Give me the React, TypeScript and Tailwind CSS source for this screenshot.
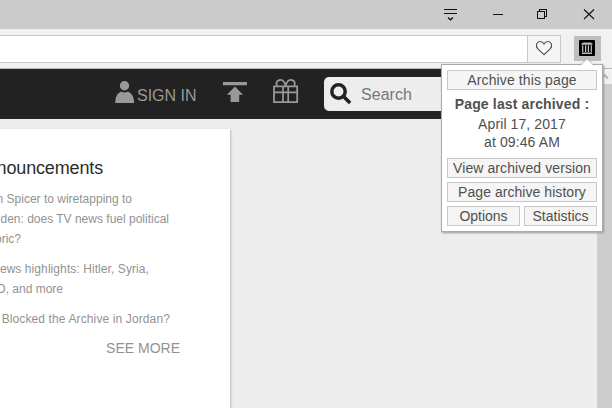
import React from "react";

function Line({ right, children }: { right: string; children: React.ReactNode }) {
  return <div className={`flex h-5 justify-end whitespace-nowrap ${right}`}>{children}</div>;
}

function PopupButton({ children, className = "", text = "" }: { children: React.ReactNode; className?: string; text?: string }) {
  return (
    <button className={`flex h-5 items-center justify-center border border-[#c8c8c8] bg-[#f5f5f5] whitespace-nowrap ${className}`}>
      <span className={text}>{children}</span>
    </button>
  );
}

function TitleBar() {
  return (
    <div className="flex h-[29px] shrink-0 justify-end bg-[#cbcbcb]">
      <svg width="180" height="29" viewBox="432 0 180 29" fill="none" stroke="#111" strokeWidth="1" shapeRendering="crispEdges">
        <path d="M444 9.5h13M444 13.5h13M493 14.5h10" />
        <path d="M448 17.5l2.5 2.3 2.5-2.3" shapeRendering="auto" strokeWidth="1.3" />
        <path d="M537.5 11.5h7v7h-7zM539.5 11v-1.5h7v7h-2" />
        <path d="M584 9.5l10 9.5M594 9.5l-10 9.5" shapeRendering="auto" strokeWidth="1.1" />
      </svg>
    </div>
  );
}

function Toolbar() {
  return (
    <div className="flex h-10 shrink-0 items-start border-b border-[#b9b9b9] bg-[#f1f1f1] pt-[6px]">
      <div className="flex h-7 w-[561px] border-y border-r border-[#c9c9c9] bg-white">
        <div className="flex-1" />
        <div className="flex w-[33px] border-l border-[#c9c9c9] bg-[#f4f5f7]">
          <svg width="32" height="26" viewBox="528 36 32 26" fill="none" stroke="#4d4d4d" strokeWidth="1.1">
            <path d="M544 54.7l-6.2-5.8c-3-3.2-.8-7.4 2.3-7.4 1.8 0 3.1.9 3.9 2.5.8-1.6 2.1-2.5 3.9-2.5 3.1 0 5.3 4.2 2.3 7.4z" />
          </svg>
        </div>
      </div>
      <div className="mt-px ml-[13px] h-[25px] w-[27px] bg-[#bebebe]">
        <svg width="27" height="25" viewBox="574 36 27 25">
          <rect x="579" y="40" width="16" height="16" rx="1" fill="#000" />
          <path d="M581.5 43.5l2-1h7l2 1v1.3h-11zM582 52.5h10v1.5h-10z" fill="#bdbdbd" />
          <path d="M582.7 45.3V52M585.6 45.3V52M588.4 45.3V52M591.3 45.3V52" stroke="#c8c8c8" strokeWidth="1.2" />
        </svg>
      </div>
    </div>
  );
}

function SiteNav() {
  return (
    <div className="flex h-[50px] items-center bg-[#222] text-[#999]">
      <svg className="ml-[115px]" width="20" height="50" viewBox="115 69 20 50" fill="#999">
        <circle cx="124.5" cy="85.7" r="4.7" />
        <path d="M115.3 103c0-6.5 2.5-10 5.8-11.4 2 1.3 4.8 1.3 6.8 0 3.3 1.4 6.2 4.9 6.2 11.4z" />
      </svg>
      <span className="mt-[3px] ml-[2px] w-[60px] text-[16px] whitespace-nowrap">SIGN IN</span>
      <svg className="ml-[26px]" width="24" height="50" viewBox="223 69 24 50" fill="#999">
        <path d="M223 82h24v3.3h-24zM235 86.5l8 8.2h-3.8v7.3h-8.6v-7.3h-3.8z" />
      </svg>
      <svg className="ml-[25px]" width="28" height="50" viewBox="272 69 28 50" fill="none" stroke="#999" strokeWidth="1.8">
        <path d="M274 86.3h23.2v15.8h-23.2zM274 92.4h23.2" />
        <path d="M283 86v16M288.2 86v16" strokeWidth="1.7" />
        <path d="M285.6 86c-1-4.2-3.2-6.3-5.7-6-4 .4-4 3.7-2.8 5.7M285.6 86c1-4.2 3.2-6.3 5.7-6 4 .4 4 3.7 2.8 5.7" />
      </svg>
      <div className="ml-[24px] flex h-[34px] w-[230px] items-center rounded-[5px] bg-[#ededed]">
        <svg className="ml-[5px]" width="24" height="34" viewBox="329 77 24 34" fill="none" stroke="#222">
          <circle cx="338.5" cy="91.5" r="6.7" strokeWidth="3.5" />
          <path d="M343.3 96.3l6.8 6.8" strokeWidth="3.5" />
        </svg>
        <span className="mt-px ml-[8px] text-[16px] tracking-[0.05px] text-[#777]">Search</span>
      </div>
    </div>
  );
}

function Announcements() {
  return (
    <div className="mt-[10px] h-[290px] w-[230px] overflow-hidden bg-white pt-[27px] text-xs leading-5 text-[#929292] shadow-[1px_1px_2px_#bbb]">
      <div className="flex h-6 w-[103px] justify-end text-[18px] leading-6 tracking-[-0.15px] text-[#2c2c2c]">
        <h2>nouncements</h2>
      </div>
      <div className="mt-[9px]">
        <Line right="w-[132px]">n Spicer to wiretapping to</Line>
        <Line right="w-[169px]">den: does TV news fuel political</Line>
        <Line right="w-[21px]">oric?</Line>
      </div>
      <div className="mt-[10px]">
        <Line right="w-[149px] tracking-[0.08px]">ews highlights: Hitler, Syria,</Line>
        <Line right="w-[63px]">O, and more</Line>
      </div>
      <div className="mt-[10px]">
        <Line right="w-[170px] tracking-[0.12px]">Blocked the Archive in Jordan?</Line>
      </div>
      <div className="mt-[9px] flex w-[180px] justify-end text-sm leading-5">SEE MORE</div>
    </div>
  );
}

function ArchivePopup() {
  return (
    <div className="absolute top-[64px] left-[441px] h-[168px] w-[162px] border border-[#aaa] bg-white px-[5px] pt-[5px] text-center text-[14px] leading-[18px] text-[#505050] shadow-[1px_1px_2px_#999]">
      <svg className="absolute top-[-7px] left-[137px]" width="16" height="8" viewBox="0 0 16 8">
        <path d="M1 8l7-7 7 7z" fill="#fff" />
        <path d="M1 7.5l7-7 7 7" fill="none" stroke="#aaa" strokeWidth=".8" />
      </svg>
      <PopupButton className="w-full" text="tracking-[0.12px]">Archive this page</PopupButton>
      <div className="mt-[5px] font-bold tracking-[0.15px] whitespace-nowrap">Page last archived :</div>
      <div className="mt-[2px] tracking-[0.1px]">April 17, 2017</div>
      <div className="tracking-[0.1px]">at 09:46 AM</div>
      <PopupButton className="mt-[7px] w-full" text="tracking-[0.1px]">View archived version</PopupButton>
      <PopupButton className="mt-1 w-full" text="tracking-[0.05px]">Page archive history</PopupButton>
      <div className="mt-1 grid grid-cols-2 gap-1">
        <PopupButton>Options</PopupButton>
        <PopupButton>Statistics</PopupButton>
      </div>
    </div>
  );
}

export default function App() {
  return (
    <div className="relative flex h-[408px] w-[612px] flex-col overflow-hidden bg-[#ededed] font-['Liberation_Sans',Arial,sans-serif]">
      <TitleBar />
      <Toolbar />
      <div className="flex min-h-0 flex-1">
        <main className="w-[597px] overflow-hidden">
          <SiteNav />
          <Announcements />
        </main>
        <div className="w-[15px] bg-[#cdcdcd]">
          <div className="h-[15px] bg-[#f1f1f1]">
            <svg width="15" height="15" fill="none" stroke="#b5b5b5" strokeWidth="2">
              <path d="M4 9.5l3.5-3.5L11 9.5" />
            </svg>
          </div>
        </div>
      </div>
      <ArchivePopup />
    </div>
  );
}
